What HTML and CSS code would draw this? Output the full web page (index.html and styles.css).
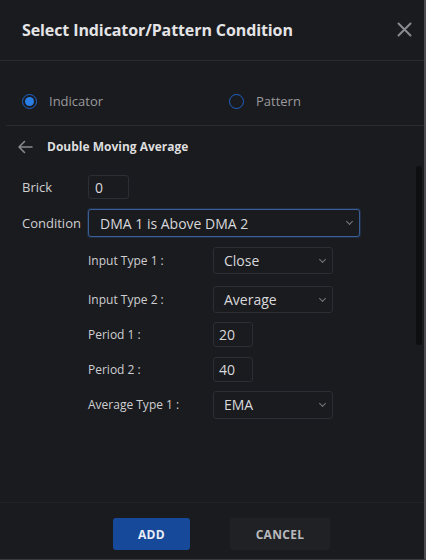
FILE: index.html
```html
<!DOCTYPE html>
<html>
<head>
<meta charset="utf-8">
<link rel="stylesheet" href="styles.css">
</head>
<body>
<div class="dialog">
  <header class="head">
    <h1 class="title">Select Indicator/Pattern Condition</h1>
    <svg class="close" width="15" height="15" viewBox="0 0 15 15"><path d="M1.5 1.5L13.5 13.5M13.5 1.5L1.5 13.5" stroke="#8a8b8f" stroke-width="2" stroke-linecap="round"/></svg>
  </header>
  <div class="radios">
    <label class="radio on"><span class="dot"></span>Indicator</label>
    <label class="radio"><span class="dot"></span>Pattern</label>
  </div>
  <div class="body">
    <div class="content">
      <div class="crumb">
        <svg class="back" width="16" height="14" viewBox="0 0 16 14"><path d="M15 7H2M7.5 1.5L2 7l5.5 5.5" fill="none" stroke="#8a8b8f" stroke-width="1.5" stroke-linecap="round" stroke-linejoin="round"/></svg>
        <span class="crumb-text">Double Moving Average</span>
      </div>
      <div class="row brick-row">
        <span class="lbl">Brick</span>
        <span class="field small">0</span>
      </div>
      <div class="row cond-row">
        <span class="lbl">Condition</span>
        <span class="field sel wide focus">DMA 1 is Above DMA 2<i class="chev"></i></span>
      </div>
      <div class="params">
        <div class="prow"><span class="plbl">Input Type 1 :</span><span class="field sel mid">Close<i class="chev"></i></span></div>
        <div class="prow second"><span class="plbl">Input Type 2 :</span><span class="field sel mid">Average<i class="chev"></i></span></div>
        <div class="prow"><span class="plbl">Period 1 :</span><span class="field num">20</span></div>
        <div class="prow"><span class="plbl">Period 2 :</span><span class="field num">40</span></div>
        <div class="prow"><span class="plbl">Average Type 1 :</span><span class="field sel mid tall">EMA<i class="chev"></i></span></div>
      </div>
    </div>
    <div class="scroll"><div class="thumb"></div></div>
  </div>
  <footer class="foot">
    <button class="btn add">ADD</button>
    <button class="btn cancel">CANCEL</button>
  </footer>
</div>
</body>
</html>
```
FILE: styles.css
```css
* { box-sizing: border-box; }
html, body { margin: 0; padding: 0; background: #1b1c20; }
body { font-family: "Open Sans", "Noto Sans", sans-serif; color: #c8c8c8; }
.dialog {
  width: 426px; height: 560px;
  background: #1a1b1f;
  border-right: 2px solid #4a4b4e;
  border-bottom: 1px solid #3a3b3e;
  display: flex; flex-direction: column;
}
.head {
  height: 61px; flex: none;
  display: flex; align-items: center; justify-content: space-between;
  padding: 0 12px 0 22px;
  border-bottom: 1px solid #2a2b30;
}
.title { margin: 0; font-size: 16px; font-weight: 700; color: #e4e4e6; letter-spacing: -0.1px; }
.close { margin-top: -2px; }
.radios {
  height: 65px; flex: none;
  margin-left: 6px;
  display: flex; align-items: center;
  padding: 16px 0 0 16px;
  border-bottom: 1px solid #2a2b30;
}
.radio { display: flex; align-items: center; gap: 12px; font-size: 13px; color: #9a9a9c; width: 207px; flex: none; }
.dot { width: 15px; height: 15px; border-radius: 50%; border: 1.5px solid #1f63c4; flex: none; position: relative; }
.radio.on .dot::after { content: ""; position: absolute; inset: 2px; border-radius: 50%; background: #2b7fe4; }
.body { flex: 1; display: flex; border-bottom: 1px solid #222327; }
.content { flex: 1; padding-left: 17px; }
.crumb { height: 40px; display: flex; align-items: center; gap: 14px; padding-top: 1px; }
.crumb-text { font-size: 12px; font-weight: 700; color: #dedede; }
.row { display: flex; align-items: center; padding-left: 5px; }
.lbl { width: 66px; font-size: 13px; color: #cfcfd1; }
.brick-row { margin-top: 9px; }
.cond-row { margin-top: 10px; }
.field {
  display: flex; align-items: center; position: relative;
  border: 1px solid #2c2e35; border-radius: 3px;
  background: #1a1b1f;
  color: #d8d8da; font-size: 14px;
}
.small { width: 41px; height: 24px; padding-left: 6px; }
.wide { width: 272px; height: 28px; padding-left: 11px; }
.focus { border-color: #3b5f93; box-shadow: 0 0 0 1px rgba(40,80,140,0.35); }
.mid { width: 120px; height: 27px; padding-left: 10px; }
.tall { height: 28px; }
.num { width: 40px; height: 25px; padding-left: 5px; }
.chev {
  position: absolute; right: 7px; top: 50%;
  width: 5px; height: 5px; margin-top: -4px;
  border-right: 1px solid #7a7b80; border-bottom: 1px solid #7a7b80;
  transform: rotate(45deg);
}
.params { padding-left: 71px; padding-top: 6px; display: flex; flex-direction: column; }
.prow { display: flex; align-items: center; height: 35px; }
.prow.second { margin-top: 4px; }
.plbl { width: 125px; font-size: 12px; color: #cfcfd1; }
.scroll { width: 8px; flex: none; padding-top: 40px; }
.thumb { width: 6px; height: 179px; background: #0e0f11; border-radius: 3px; }
.foot { height: 56px; flex: none; display: flex; align-items: flex-start; padding: 15px 0 0 113px; gap: 40px; }
.btn { font-family: inherit; font-size: 12px; font-weight: 700; border: none; border-radius: 3px; height: 32px; letter-spacing: 0.3px; }
.add { width: 77px; background: #17499a; color: #e8ecf4; }
.cancel { width: 100px; background: #202125; color: #b8b9bd; }
```
